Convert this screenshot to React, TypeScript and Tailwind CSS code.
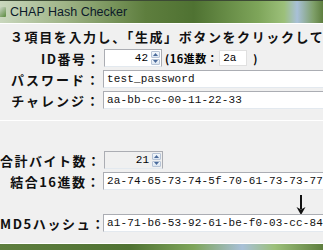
import { ReactNode } from "react";

const jp = "font-['Noto_Sans_CJK_JP',sans-serif]";
const mono = "font-['Liberation_Mono','DejaVu_Sans_Mono',monospace]";

function Spin() {
    return (
        <div className="flex w-[10px] flex-col gap-px self-stretch py-px pr-px">
            <div className="flex flex-1 items-center justify-center rounded-[1px] border border-[#b7c4d6] bg-gradient-to-b from-[#f4f8fc] to-[#dbe6f2]">
                <svg width="5" height="3" viewBox="0 0 5 3"><path d="M0 3 L2.5 0 L5 3 Z" fill="#4a6a9a" /></svg>
            </div>
            <div className="flex flex-1 items-center justify-center rounded-[1px] border border-[#b7c4d6] bg-gradient-to-b from-[#f4f8fc] to-[#dbe6f2]">
                <svg width="5" height="3" viewBox="0 0 5 3"><path d="M0 0 L2.5 3 L5 0 Z" fill="#4a6a9a" /></svg>
            </div>
        </div>
    );
}

function Label({ children, className = "" }: { children: ReactNode; className?: string }) {
    return (
        <div className={`w-[101px] shrink-0 whitespace-nowrap text-right text-[13px] font-bold leading-none tracking-[1.5px] text-[#111] ${jp} ${className}`}>
            {children}
        </div>
    );
}

function Field({ value }: { value: string }) {
    return (
        <div className={`ml-[2px] flex h-[18px] w-[240px] shrink-0 items-center whitespace-nowrap border border-[#abadb3] border-b-[#e3e9ef] bg-white pl-[3px] text-[11px] tracking-[0.15px] text-[#111] ${mono}`}>
            {value}
        </div>
    );
}

function TitleBar() {
    return (
        <div className="relative h-[23px] shrink-0 border-t border-[#3c4a34] bg-[linear-gradient(90deg,#c9d7bd_0%,#9fb487_20%,#5e7e3e_45%,#4f7232_60%,#7ea55a_80%,#9cc07a_88%,#a8c0d8_92%,#7fa06a_97%,#5e7e3e_100%)]">
            <div className="flex h-full items-center gap-[4px]">
                <div className="ml-[-4px] h-[10px] w-[10px] rounded-[1px] bg-gradient-to-br from-[#e8e8e8] to-[#5a8a3a]" />
                <span className="font-['Liberation_Sans',sans-serif] text-[12.5px] text-[#0c1a2a]">CHAP Hash Checker</span>
            </div>
        </div>
    );
}

export default function App() {
    return (
        <div className="flex h-[250px] w-[323px] flex-col overflow-hidden bg-[#f0f0f0]">
            <TitleBar />
            <div className="h-px bg-white" />
            <div className="flex-1">
                <div className={`mt-[6px] whitespace-nowrap pl-[10px] text-[13px] font-bold leading-none tracking-[1.6px] text-[#111] ${jp}`}>
                    ３項目を入力し、「生成」ボタンをクリックして
                </div>

                <div className="mt-[6px] flex items-center">
                    <Label>ID番号：</Label>
                    <div className={`ml-[3px] flex h-[18px] w-[58px] items-center border border-[#abadb3] border-b-[#e3e9ef] bg-white text-[11px] ${mono}`}>
                        <span className="flex-1 pr-[3px] text-right">42</span>
                        <Spin />
                    </div>
                    <span className={`ml-[3px] whitespace-nowrap text-[11px] font-bold tracking-[0.5px] ${jp}`}>(16進数：</span>
                    <div className={`ml-[1px] flex h-[16px] w-[28px] items-center border border-[#e0e0e0] bg-white pl-[3px] text-[11px] ${mono}`}>2a</div>
                    <span className={`ml-[6px] text-[11px] font-bold ${jp}`}>)</span>
                </div>

                <div className="mt-[3px] flex items-center">
                    <Label className="tracking-[2px]">パスワード：</Label>
                    <Field value="test_password" />
                </div>

                <div className="mt-[3px] flex items-center">
                    <Label className="tracking-[2px]">チャレンジ：</Label>
                    <Field value="aa-bb-cc-00-11-22-33" />
                </div>

                <div className="mt-[11px] h-px bg-white" />

                <div className="mt-[30px] flex items-center">
                    <Label className="w-[100px] tracking-[1.2px]">合計バイト数：</Label>
                    <div className={`ml-[3px] flex h-[18px] w-[59px] items-center border border-[#abadb3] border-b-[#e3e9ef] bg-[#f0f0f0] text-[11px] ${mono}`}>
                        <span className="flex-1 pr-[3px] text-right">21</span>
                        <Spin />
                    </div>
                </div>

                <div className="mt-[3px] flex items-center">
                    <Label>結合16進数：</Label>
                    <Field value="2a-74-65-73-74-5f-70-61-73-73-77" />
                </div>

                <div className="flex h-[24px] justify-end pr-[17px] pt-[5px]">
                    <svg width="10" height="20" viewBox="0 0 10 20">
                        <path d="M5 0 V14" stroke="#111" strokeWidth="2" />
                        <path d="M0.5 12 L5 20 L9.5 12 L5 14.5 Z" fill="#111" />
                    </svg>
                </div>

                <div className="flex items-center">
                    <Label className="tracking-[1.6px]">MD5ハッシュ：</Label>
                    <Field value="a1-71-b6-53-92-61-be-f0-03-cc-84" />
                </div>
            </div>
            <div className="h-px bg-white" />
            <div className="h-[6px] shrink-0 bg-[linear-gradient(90deg,#5e7e3e_0%,#4f7232_40%,#7ea55a_60%,#a8c0d8_75%,#9cc07a_85%,#5e7e3e_100%)]" />
        </div>
    );
}
